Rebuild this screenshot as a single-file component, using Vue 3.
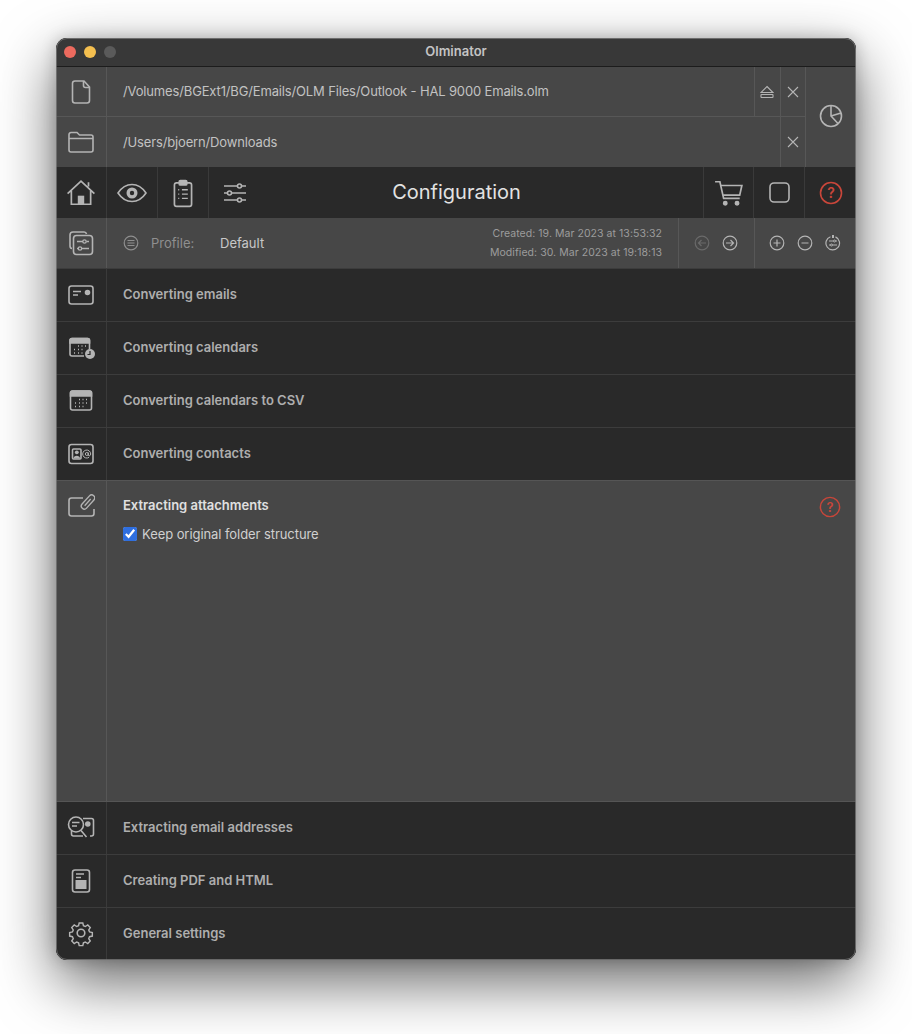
<script setup>
const topSections = [
  {
    title: 'Converting emails',
    icon: '<rect x="2" y="5" width="24" height="18" rx="2.500"/><path d="M6 10.500h8M6 14h5"/><circle cx="20.500" cy="11.500" r="2" fill="currentColor"/>'
  },
  {
    title: 'Converting calendars',
    icon: '<path d="M22.500 15V6.500a2 2 0 0 0-2-2H5a2 2 0 0 0-2 2V20a2 2 0 0 0 2 2h12"/><path d="M3 9V6.500a2 2 0 0 1 2-2h15.500a2 2 0 0 1 2 2V9z" fill="currentColor"/><path d="M11 12h1m2.500 0h1m2.500 0h1M7 15.500h1m3 0h1m2.500 0h1M7 19h1m3 0h1m2.500 0h1" stroke-width="1.600"/><circle cx="23" cy="20" r="5" fill="currentColor" stroke="none"/><path d="M23 17v3.500h-2.500" stroke="#292929" stroke-width="1.200"/>'
  },
  {
    title: 'Converting calendars to CSV',
    icon: '<rect x="3.500" y="4" width="21" height="19" rx="2"/><path d="M3.500 9V6a2 2 0 0 1 2-2h17a2 2 0 0 1 2 2v3z" fill="currentColor"/><path d="M12 12.500h1m2.500 0h1m2.500 0h1M8 16h1m3 0h1m2.500 0h1m2.500 0h1M8 19.500h1m3 0h1m2.500 0h1" stroke-width="1.600"/>'
  },
  {
    title: 'Converting contacts',
    icon: '<rect x="2" y="4.500" width="24" height="19" rx="2.500"/><rect x="5.500" y="9" width="8.500" height="10" rx="1"/><circle cx="9.800" cy="12.300" r="1.900" fill="currentColor" stroke="none"/><path d="M6.500 18.500c0-3.600 6.500-3.600 6.500 0z" fill="currentColor" stroke="none"/><circle cx="19.800" cy="14" r="1.500" stroke-width="1"/><path d="M21.300 12.500V15c0 1.400 2.400 1.100 2.400-1a4 4 0 1 0-1.700 3.300" stroke-width="1"/>'
  }
]

const bottomSections = [
  {
    title: 'Extracting email addresses',
    icon: '<path d="M16 4.500h8.500a2 2 0 0 1 2 2V20a2 2 0 0 1-2 2h-1.500"/><path d="M4.500 17v3a2 2 0 0 0 2 2h9.500"/><circle cx="9" cy="10.500" r="7.500"/><path d="M5 8.500h7.500M5 12h5M14 16.500l5.500 6.500"/><circle cx="20.800" cy="10" r="2" fill="currentColor"/>'
  },
  {
    title: 'Creating PDF and HTML',
    icon: '<rect x="5.500" y="3" width="17" height="22" rx="2.500"/><path d="M9 7h8M9 10.500h5"/><rect x="8.500" y="13" width="11" height="9" fill="currentColor" stroke="none"/>'
  },
  {
    title: 'General settings',
    icon: '<circle cx="14" cy="13" r="3.800"/><path d="M12 2.800h4l.7 3.100 2.100.9 2.700-1.700 2.800 2.800-1.700 2.700.9 2.100 3.100.7v4l-3.100.7-.9 2.100 1.700 2.700-2.800 2.800-2.700-1.700-2.100.9-.7 3.100h-4l-.7-3.100-2.100-.9-2.700 1.700-2.800-2.800 1.700-2.700-.9-2.100-3.100-.7v-4l3.100-.7.9-2.100-1.700-2.700 2.800-2.800 2.700 1.700 2.100-.9z" transform="translate(1.400 .4) scale(.9)"/>'
  }
]
</script>

<template>
  <div class="window">
    <header class="titlebar">
      <div class="lights">
        <span class="light red"></span>
        <span class="light yellow"></span>
        <span class="light gray"></span>
      </div>
      <span class="app-title">Olminator</span>
    </header>

    <div class="paths">
      <div class="path-rows">
        <div class="path-row">
          <div class="cell side">
            <svg class="icon" viewBox="0 0 28 28">
              <path d="M17 3H8a2.500 2.500 0 0 0-2.500 2.500v17A2.500 2.500 0 0 0 8 25h12a2.500 2.500 0 0 0 2.500-2.500V9z" />
              <path d="M16.500 3v4.500A2 2 0 0 0 18.500 9.500H22.500" />
            </svg>
          </div>
          <div class="path-text">/Volumes/BGExt1/BG/Emails/OLM Files/Outlook - HAL 9000 Emails.olm</div>
          <div class="cell small">
            <svg class="icon-sm" viewBox="0 0 14 14">
              <path d="M7 1.500 13 7.500H1zM1.500 9.500h11a.5.5 0 0 1 .5.5v2a.5.5 0 0 1-.5.5h-11A.5.5 0 0 1 1 12v-2a.5.5 0 0 1 .5-.5z" />
            </svg>
          </div>
          <div class="cell small">
            <svg class="icon-sm" viewBox="0 0 14 14"><path d="M2 2l10 10M12 2 2 12" /></svg>
          </div>
        </div>
        <div class="path-row">
          <div class="cell side">
            <svg class="icon" viewBox="0 0 28 28">
              <path d="M2 8V6.500A2 2 0 0 1 4 4.500h6l2.500 2.500H24a2 2 0 0 1 2 2V22a2 2 0 0 1-2 2H4a2 2 0 0 1-2-2z" />
              <path d="M2 10.500h24" />
            </svg>
          </div>
          <div class="path-text">/Users/bjoern/Downloads</div>
          <div class="cell small">
            <svg class="icon-sm" viewBox="0 0 14 14"><path d="M2 2l10 10M12 2 2 12" /></svg>
          </div>
        </div>
      </div>
      <div class="cell stats">
        <svg class="icon" viewBox="0 0 28 28">
          <circle cx="14" cy="14" r="10.500" />
          <path d="M14 3.500V14l7 7.500M14 14l10-3" />
        </svg>
      </div>
    </div>

    <nav class="toolbar">
      <div class="cell tool">
        <svg class="icon big" viewBox="0 0 28 28">
          <path d="M1.500 14.500 14 3l12.500 11.500M5 12v12.500h18V12M21 8V4" />
          <rect x="11" y="16.500" width="6" height="8" fill="currentColor" stroke="none" />
        </svg>
      </div>
      <div class="cell tool">
        <svg class="icon eye" viewBox="0 0 30 20">
          <path d="M1 10C5 4 10 1.500 15 1.500S25 4 29 10c-4 6-9 8.500-14 8.500S5 16 1 10z" />
          <circle cx="15" cy="10" r="5.500" fill="currentColor" stroke="none" />
          <circle cx="15" cy="10" r="2.200" fill="#292929" stroke="none" />
        </svg>
      </div>
      <div class="cell tool">
        <svg class="icon big" viewBox="0 0 28 28">
          <path d="M10.500 4.500H8a2 2 0 0 0-2 2v18a2 2 0 0 0 2 2h12a2 2 0 0 0 2-2v-18a2 2 0 0 0-2-2h-2.500" />
          <rect x="10.500" y="2.500" width="7" height="4" rx="1" fill="currentColor" />
          <path d="M9.500 11h1m2.500 0h5.500M9.500 15h1m2.500 0h5.500M9.500 19h1m2.500 0h5.500" stroke-width="1.300" />
        </svg>
      </div>
      <div class="cell tool plain">
        <svg class="icon" viewBox="0 0 28 28">
          <path d="M3 7h13M21 7h4M3 14h3M11 14h14M3 21h13M21 21h4" />
          <circle cx="18.500" cy="7" r="2" />
          <circle cx="8.500" cy="14" r="2" />
          <circle cx="18.500" cy="21" r="2" />
        </svg>
      </div>
      <h1 class="page-title">Configuration</h1>
      <div class="cell tool divider-left">
        <svg class="icon big" viewBox="0 0 28 28">
          <path d="M1 3.500h4.500l3.500 15.500h15" />
          <path d="M6.500 7H26l-2 9H8.500" />
          <circle cx="10.500" cy="23.500" r="1.500" fill="currentColor" />
          <circle cx="21.500" cy="23.500" r="1.500" fill="currentColor" />
        </svg>
      </div>
      <div class="cell tool">
        <svg class="icon" viewBox="0 0 28 28"><rect x="5" y="4" width="19" height="19" rx="4" /></svg>
      </div>
      <div class="cell tool plain">
        <svg class="icon help" viewBox="0 0 24 24">
          <circle cx="12" cy="12" r="10.500" />
          <text x="12" y="17" text-anchor="middle" class="help-mark">?</text>
        </svg>
      </div>
    </nav>

    <section class="profile">
      <div class="cell side">
        <svg class="icon" viewBox="0 0 28 28">
          <path d="M5 19.500A2.500 2.500 0 0 1 3 17V6a3 3 0 0 1 3-3h11a2.500 2.500 0 0 1 2.500 2" />
          <rect x="6.500" y="6.500" width="19" height="19" rx="3" />
          <path d="M10 12.500h6m3.500 0H22M10 19.500h1.500m3.500 0h7" stroke-width="1.300" />
          <circle cx="17.500" cy="12.500" r="1.700" stroke-width="1.300" />
          <circle cx="13" cy="19.500" r="1.700" stroke-width="1.300" />
        </svg>
      </div>
      <div class="profile-main">
        <svg class="icon-md dim" viewBox="0 0 16 16">
          <circle cx="8" cy="8" r="6.800" />
          <path d="M4.500 5.500h7M4.500 8h7M4.500 10.500h7" />
        </svg>
        <span class="profile-label">Profile:</span>
        <span class="profile-name">Default</span>
        <div class="dates">
          <span>Created: 19. Mar 2023 at 13:53:32</span>
          <span>Modified: 30. Mar 2023 at 19:18:13</span>
        </div>
      </div>
      <div class="profile-group nav-group">
        <svg class="icon-md faded" viewBox="0 0 16 16">
          <circle cx="8" cy="8" r="6.800" />
          <path d="M12 8H4.500M7.500 5 4.500 8l3 3" />
        </svg>
        <svg class="icon-md" viewBox="0 0 16 16">
          <circle cx="8" cy="8" r="6.800" />
          <path d="M4 8h7.500M8.500 5l3 3-3 3" />
        </svg>
      </div>
      <div class="profile-group edit-group">
        <svg class="icon-md" viewBox="0 0 16 16">
          <circle cx="8" cy="8" r="6.800" />
          <path d="M8 4.500v7M4.500 8h7" />
        </svg>
        <svg class="icon-md" viewBox="0 0 16 16">
          <circle cx="8" cy="8" r="6.800" />
          <path d="M4.500 8h7" />
        </svg>
        <svg class="icon-md" viewBox="0 0 16 16">
          <path d="M10.500 1.900A6.800 6.800 0 1 1 5.500 1.700" />
          <path d="M8 0v3" stroke-width="2" />
          <path d="M4 6h4.500m2 0H12M4 10h1.500m2 0H12" stroke-width="1" />
          <circle cx="9.500" cy="6" r="1" stroke-width="1" />
          <circle cx="6.500" cy="10" r="1" stroke-width="1" />
        </svg>
      </div>
    </section>

    <div v-for="item in topSections" :key="item.title" class="section">
      <div class="cell side">
        <svg class="icon" viewBox="0 0 28 28" v-html="item.icon"></svg>
      </div>
      <div class="section-title">{{ item.title }}</div>
    </div>

    <section class="expanded">
      <div class="cell side top">
        <svg class="icon" viewBox="0 0 28 28">
          <path d="M16 6H4.500A2.500 2.500 0 0 0 2 8.500v13A2.500 2.500 0 0 0 4.500 24h20a2.500 2.500 0 0 0 2.500-2.500V17" />
          <g transform="rotate(42 21 10)">
            <rect x="18" y="1.500" width="6" height="17" rx="3" stroke-width="1.400" />
            <path d="M21 6v9" stroke-width="1.300" />
          </g>
        </svg>
      </div>
      <div class="expanded-body">
        <div class="expanded-title">Extracting attachments</div>
        <label class="check">
          <input type="checkbox" checked />
          <span>Keep original folder structure</span>
        </label>
        <svg class="icon help corner" viewBox="0 0 24 24">
          <circle cx="12" cy="12" r="10.500" />
          <text x="12" y="17" text-anchor="middle" class="help-mark">?</text>
        </svg>
      </div>
    </section>

    <div v-for="item in bottomSections" :key="item.title" class="section">
      <div class="cell side">
        <svg class="icon" viewBox="0 0 28 28" v-html="item.icon"></svg>
      </div>
      <div class="section-title">{{ item.title }}</div>
    </div>
  </div>
</template>

<style>
html,
body {
  margin: 0;
  background: #fff;
}
</style>

<style scoped>
.window {
  position: relative;
  box-sizing: border-box;
  width: 800px;
  margin: 38px 0 74px 56px;
  border-radius: 11px;
  overflow: hidden;
  background: #292929;
  color: #b4b4b4;
  font-family: Inter, "Liberation Sans", sans-serif;
  box-shadow: 0 22px 60px rgba(0, 0, 0, 0.6), 0 0 16px rgba(0, 0, 0, 0.2);
}

/* thin light edge drawn over the content */
.window::after {
  content: "";
  position: absolute;
  inset: 0;
  border: 1px solid rgba(125, 125, 125, 0.75);
  border-radius: 11px;
  pointer-events: none;
}

.titlebar {
  position: relative;
  display: flex;
  align-items: center;
  justify-content: center;
  height: 29px;
  padding-bottom: 2px;
  background: #383838;
  border-bottom: 1px solid #1c1c1c;
  box-sizing: border-box;
}

.lights {
  position: absolute;
  left: 8px;
  top: 8px;
  display: flex;
  gap: 8px;
}

.light {
  width: 12px;
  height: 12px;
  border-radius: 50%;
}

.red { background: #ec6a5e; }
.yellow { background: #f4bf4f; }
.gray { background: #5a5a5a; }

.app-title {
  font-size: 13px;
  font-weight: 600;
  color: #c4c4c4;
}

.cell {
  display: flex;
  align-items: center;
  justify-content: center;
  flex: none;
  box-sizing: border-box;
}

.side {
  width: 51px;
  border-right: 1px solid #3a3a3a;
  align-self: stretch;
}

.side.top {
  align-items: flex-start;
  padding-top: 11px;
  border-right-color: #575757;
}

.icon {
  width: 28px;
  height: 28px;
  fill: none;
  stroke: currentColor;
  stroke-width: 1.600;
  color: #b4b4b4;
}

.icon.big {
  width: 30px;
  height: 30px;
}

.icon.eye {
  width: 30px;
  height: 20px;
}

.icon.help {
  width: 24px;
  height: 24px;
  color: #c8463a;
}

.help-mark {
  font-size: 14px;
  font-weight: 600;
  fill: #c8463a;
  stroke: none;
}

.icon-sm {
  width: 14px;
  height: 14px;
  fill: none;
  stroke: #b4b4b4;
  stroke-width: 1.100;
}

.icon-md {
  width: 16px;
  height: 16px;
  fill: none;
  stroke: #b4b4b4;
  stroke-width: 1.200;
}

.icon-md.dim { stroke: #8e8e8e; }
.icon-md.faded { stroke: #6a6a6a; }

.paths {
  display: flex;
  height: 100px;
  background: #474747;
}

.path-rows {
  flex: 1;
  display: flex;
  flex-direction: column;
}

.path-row {
  flex: 1;
  display: flex;
  align-items: stretch;
}

.path-row:first-child {
  flex: none;
  height: 49px;
}

.path-row + .path-row {
  border-top: 1px solid #575757;
}

.path-row .side {
  border-right-color: #575757;
}

.path-text {
  flex: 1;
  padding: 0 0 2px 16px;
  display: flex;
  align-items: center;
  font-size: 13px;
  letter-spacing: -0.150px;
  color: #c2c2c2;
}

.path-row + .path-row .path-text {
  padding-bottom: 0;
}

.small {
  width: 25.500px;
  border-left: 1px solid #575757;
}

.stats {
  width: 51px;
  padding-bottom: 2px;
  border-left: 1px solid #575757;
}

.toolbar {
  display: flex;
  height: 51px;
  background: #292929;
}

.tool {
  width: 51px;
  border-right: 1px solid #3a3a3a;
}

.tool.plain {
  border-right: none;
}

.divider-left {
  border-left: 1px solid #3a3a3a;
}

.page-title {
  flex: 1;
  margin: 0;
  padding: 0 50px 2px 0;
  align-self: center;
  text-align: center;
  font-size: 20px;
  font-weight: 400;
  color: #e2e2e2;
}

.profile {
  display: flex;
  height: 50px;
  background: #474747;
}

.profile .side {
  border-right-color: #575757;
}

.profile-main {
  flex: 1;
  display: flex;
  align-items: center;
  padding: 0 16px 1px;
  font-size: 13px;
}

.profile-label {
  margin-left: 12px;
  width: 69px;
  color: #8f8f8f;
}

.profile-name {
  color: #c8c8c8;
}

.dates {
  margin-left: auto;
  display: flex;
  flex-direction: column;
  align-items: flex-end;
  gap: 6px;
  font-size: 10.500px;
  line-height: 13px;
  letter-spacing: 0.050px;
  color: #9c9c9c;
}

.profile-group {
  display: flex;
  align-items: center;
  justify-content: center;
  box-sizing: border-box;
  padding: 0 2px 1px 0;
  border-left: 1px solid #575757;
}

.nav-group {
  width: 76px;
  gap: 12px;
}

.edit-group {
  width: 102px;
  gap: 12px;
}

.section {
  display: flex;
  height: 53px;
  box-sizing: border-box;
  border-top: 1px solid #3c3c3c;
  background: #292929;
}

.section .side {
  padding-bottom: 1px;
}

.section-title {
  padding: 0 0 3px 16px;
  align-self: center;
  font-size: 13px;
  font-weight: 600;
  color: #aeaeae;
}

.expanded {
  display: flex;
  height: 321px;
  box-sizing: border-box;
  background: #474747;
  border-top: 1px solid #555;
}

.expanded + .section {
  border-top: 1px solid #555;
}

.expanded-body {
  position: relative;
  flex: 1;
  padding: 15px 16px;
}

.expanded-title {
  font-size: 13px;
  font-weight: 600;
  line-height: 18px;
  color: #e0e0e0;
}

.check {
  display: flex;
  align-items: center;
  gap: 5px;
  margin-top: 11px;
  font-size: 13px;
  line-height: 18px;
  letter-spacing: -0.070px;
  color: #d0d0d0;
}

.check input {
  width: 14px;
  height: 14px;
  margin: 0;
  accent-color: #2f6fe0;
}

.corner {
  position: absolute;
  top: 15px;
  right: 15px;
  width: 22px !important;
  height: 22px !important;
}
</style>
